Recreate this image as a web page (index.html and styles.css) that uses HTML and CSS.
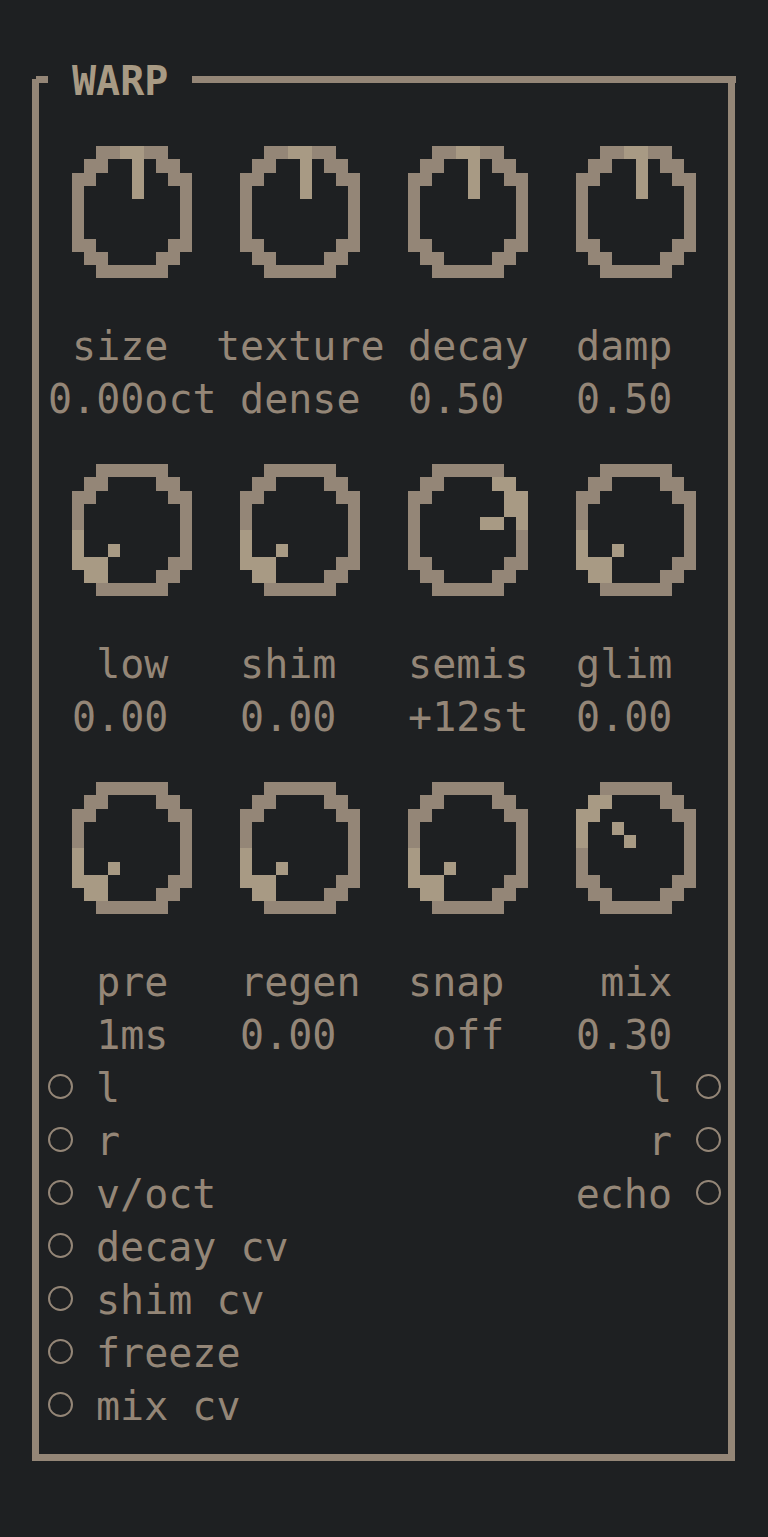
FILE: index.html
```html
<!DOCTYPE html>
<html lang="en">
<head>
<meta charset="utf-8">
<title>WARP</title>
<link rel="stylesheet" href="styles.css">
</head>
<body>
<main class="screen">
  <div class="frame"></div>
  <h1 class="title">WARP</h1>

  <section class="controls">
    <div class="control">
      <div class="knob-wrap"><svg class="knob" viewBox="0 0 10 10" preserveAspectRatio="none"><path class="ring" d="M2 0h6v1h-6zM1 1h2v1h-2zM7 1h2v1h-2zM0 2h2v1h-2zM8 2h2v1h-2zM0 3h1v4h-1zM9 3h1v4h-1zM0 7h2v1h-2zM8 7h2v1h-2zM1 8h2v1h-2zM7 8h2v1h-2zM2 9h6v1h-6z"/><path class="hl" d="M4 0h2v1h-2zM5 1h1v3h-1z"/></svg></div>
      <span class="label"> size</span>
      <span class="value">0.00oct</span>
    </div>
    <div class="control">
      <div class="knob-wrap"><svg class="knob" viewBox="0 0 10 10" preserveAspectRatio="none"><path class="ring" d="M2 0h6v1h-6zM1 1h2v1h-2zM7 1h2v1h-2zM0 2h2v1h-2zM8 2h2v1h-2zM0 3h1v4h-1zM9 3h1v4h-1zM0 7h2v1h-2zM8 7h2v1h-2zM1 8h2v1h-2zM7 8h2v1h-2zM2 9h6v1h-6z"/><path class="hl" d="M4 0h2v1h-2zM5 1h1v3h-1z"/></svg></div>
      <span class="label">texture</span>
      <span class="value"> dense</span>
    </div>
    <div class="control">
      <div class="knob-wrap"><svg class="knob" viewBox="0 0 10 10" preserveAspectRatio="none"><path class="ring" d="M2 0h6v1h-6zM1 1h2v1h-2zM7 1h2v1h-2zM0 2h2v1h-2zM8 2h2v1h-2zM0 3h1v4h-1zM9 3h1v4h-1zM0 7h2v1h-2zM8 7h2v1h-2zM1 8h2v1h-2zM7 8h2v1h-2zM2 9h6v1h-6z"/><path class="hl" d="M4 0h2v1h-2zM5 1h1v3h-1z"/></svg></div>
      <span class="label"> decay</span>
      <span class="value"> 0.50</span>
    </div>
    <div class="control">
      <div class="knob-wrap"><svg class="knob" viewBox="0 0 10 10" preserveAspectRatio="none"><path class="ring" d="M2 0h6v1h-6zM1 1h2v1h-2zM7 1h2v1h-2zM0 2h2v1h-2zM8 2h2v1h-2zM0 3h1v4h-1zM9 3h1v4h-1zM0 7h2v1h-2zM8 7h2v1h-2zM1 8h2v1h-2zM7 8h2v1h-2zM2 9h6v1h-6z"/><path class="hl" d="M4 0h2v1h-2zM5 1h1v3h-1z"/></svg></div>
      <span class="label"> damp</span>
      <span class="value"> 0.50</span>
    </div>

    <div class="control">
      <div class="knob-wrap"><svg class="knob" viewBox="0 0 10 10" preserveAspectRatio="none"><path class="ring" d="M2 0h6v1h-6zM1 1h2v1h-2zM7 1h2v1h-2zM0 2h2v1h-2zM8 2h2v1h-2zM0 3h1v4h-1zM9 3h1v4h-1zM0 7h2v1h-2zM8 7h2v1h-2zM1 8h2v1h-2zM7 8h2v1h-2zM2 9h6v1h-6z"/><path class="hl" d="M0 5h1v2h-1zM0 7h3v1h-3zM1 8h2v1h-2zM3 6h1v1h-1z"/></svg></div>
      <span class="label">  low</span>
      <span class="value"> 0.00</span>
    </div>
    <div class="control">
      <div class="knob-wrap"><svg class="knob" viewBox="0 0 10 10" preserveAspectRatio="none"><path class="ring" d="M2 0h6v1h-6zM1 1h2v1h-2zM7 1h2v1h-2zM0 2h2v1h-2zM8 2h2v1h-2zM0 3h1v4h-1zM9 3h1v4h-1zM0 7h2v1h-2zM8 7h2v1h-2zM1 8h2v1h-2zM7 8h2v1h-2zM2 9h6v1h-6z"/><path class="hl" d="M0 5h1v2h-1zM0 7h3v1h-3zM1 8h2v1h-2zM3 6h1v1h-1z"/></svg></div>
      <span class="label"> shim</span>
      <span class="value"> 0.00</span>
    </div>
    <div class="control">
      <div class="knob-wrap"><svg class="knob" viewBox="0 0 10 10" preserveAspectRatio="none"><path class="ring" d="M2 0h6v1h-6zM1 1h2v1h-2zM7 1h2v1h-2zM0 2h2v1h-2zM8 2h2v1h-2zM0 3h1v4h-1zM9 3h1v4h-1zM0 7h2v1h-2zM8 7h2v1h-2zM1 8h2v1h-2zM7 8h2v1h-2zM2 9h6v1h-6z"/><path class="hl" d="M7 1h2v1h-2zM8 2h2v2h-2zM9 4h1v1h-1zM6 4h2v1h-2z"/></svg></div>
      <span class="label"> semis</span>
      <span class="value"> +12st</span>
    </div>
    <div class="control">
      <div class="knob-wrap"><svg class="knob" viewBox="0 0 10 10" preserveAspectRatio="none"><path class="ring" d="M2 0h6v1h-6zM1 1h2v1h-2zM7 1h2v1h-2zM0 2h2v1h-2zM8 2h2v1h-2zM0 3h1v4h-1zM9 3h1v4h-1zM0 7h2v1h-2zM8 7h2v1h-2zM1 8h2v1h-2zM7 8h2v1h-2zM2 9h6v1h-6z"/><path class="hl" d="M0 5h1v2h-1zM0 7h3v1h-3zM1 8h2v1h-2zM3 6h1v1h-1z"/></svg></div>
      <span class="label"> glim</span>
      <span class="value"> 0.00</span>
    </div>

    <div class="control">
      <div class="knob-wrap"><svg class="knob" viewBox="0 0 10 10" preserveAspectRatio="none"><path class="ring" d="M2 0h6v1h-6zM1 1h2v1h-2zM7 1h2v1h-2zM0 2h2v1h-2zM8 2h2v1h-2zM0 3h1v4h-1zM9 3h1v4h-1zM0 7h2v1h-2zM8 7h2v1h-2zM1 8h2v1h-2zM7 8h2v1h-2zM2 9h6v1h-6z"/><path class="hl" d="M0 5h1v2h-1zM0 7h3v1h-3zM1 8h2v1h-2zM3 6h1v1h-1z"/></svg></div>
      <span class="label">  pre</span>
      <span class="value">  1ms</span>
    </div>
    <div class="control">
      <div class="knob-wrap"><svg class="knob" viewBox="0 0 10 10" preserveAspectRatio="none"><path class="ring" d="M2 0h6v1h-6zM1 1h2v1h-2zM7 1h2v1h-2zM0 2h2v1h-2zM8 2h2v1h-2zM0 3h1v4h-1zM9 3h1v4h-1zM0 7h2v1h-2zM8 7h2v1h-2zM1 8h2v1h-2zM7 8h2v1h-2zM2 9h6v1h-6z"/><path class="hl" d="M0 5h1v2h-1zM0 7h3v1h-3zM1 8h2v1h-2zM3 6h1v1h-1z"/></svg></div>
      <span class="label"> regen</span>
      <span class="value"> 0.00</span>
    </div>
    <div class="control">
      <div class="knob-wrap"><svg class="knob" viewBox="0 0 10 10" preserveAspectRatio="none"><path class="ring" d="M2 0h6v1h-6zM1 1h2v1h-2zM7 1h2v1h-2zM0 2h2v1h-2zM8 2h2v1h-2zM0 3h1v4h-1zM9 3h1v4h-1zM0 7h2v1h-2zM8 7h2v1h-2zM1 8h2v1h-2zM7 8h2v1h-2zM2 9h6v1h-6z"/><path class="hl" d="M0 5h1v2h-1zM0 7h3v1h-3zM1 8h2v1h-2zM3 6h1v1h-1z"/></svg></div>
      <span class="label"> snap</span>
      <span class="value">  off</span>
    </div>
    <div class="control">
      <div class="knob-wrap"><svg class="knob" viewBox="0 0 10 10" preserveAspectRatio="none"><path class="ring" d="M2 0h6v1h-6zM1 1h2v1h-2zM7 1h2v1h-2zM0 2h2v1h-2zM8 2h2v1h-2zM0 3h1v4h-1zM9 3h1v4h-1zM0 7h2v1h-2zM8 7h2v1h-2zM1 8h2v1h-2zM7 8h2v1h-2zM2 9h6v1h-6z"/><path class="hl" d="M1 1h2v1h-2zM0 2h2v1h-2zM0 3h1v2h-1zM3 3h1v1h-1zM4 4h1v1h-1z"/></svg></div>
      <span class="label">  mix</span>
      <span class="value"> 0.30</span>
    </div>
  </section>

  <section class="ports">
    <ul class="port-list inputs">
      <li class="port"><span class="jack"></span><span class="port-name">l</span></li>
      <li class="port"><span class="jack"></span><span class="port-name">r</span></li>
      <li class="port"><span class="jack"></span><span class="port-name">v/oct</span></li>
      <li class="port"><span class="jack"></span><span class="port-name">decay cv</span></li>
      <li class="port"><span class="jack"></span><span class="port-name">shim cv</span></li>
      <li class="port"><span class="jack"></span><span class="port-name">freeze</span></li>
      <li class="port"><span class="jack"></span><span class="port-name">mix cv</span></li>
    </ul>
    <ul class="port-list outputs">
      <li class="port"><span class="port-name">l</span><span class="jack"></span></li>
      <li class="port"><span class="port-name">r</span><span class="jack"></span></li>
      <li class="port"><span class="port-name">echo</span><span class="jack"></span></li>
    </ul>
  </section>
</main>
</body>
</html>
```

FILE: styles.css
```css
/* Character-cell panel: 32 columns of 24px, 29 rows of 53px */
:root {
  --bg: #1e2022;
  --ink: #948677;
  --ink-hi: #a89a84;
}

* {
  box-sizing: border-box;
}

html,
body {
  margin: 0;
  padding: 0;
  background: var(--bg);
}

.screen {
  display: grid;
  grid-template-columns: repeat(32, 24px);
  grid-template-rows: repeat(29, 53px);
  width: 768px;
  height: 1537px;
  overflow: hidden;
  font-family: "DejaVu Sans Mono", "Liberation Mono", monospace;
  font-size: 40px;
  line-height: 53px;
  color: var(--ink);
}

/* Box outline drawn through the centres of the border cells */
.frame {
  grid-column: 2 / 32;
  grid-row: 2 / 29;
  position: relative;
  margin: 26px 9px 23px 8px;
  border: 7px solid var(--ink);
  border-top: 0;
}

.frame::before {
  content: "";
  position: absolute;
  top: -3px;
  left: -3px;
  right: -8px;
  height: 7px;
  background: var(--ink);
}

.title {
  grid-column: 3 / 9;
  grid-row: 2;
  position: relative;
  margin: 0;
  padding-left: 24px;
  background: var(--bg);
  font-size: 40px;
  font-weight: bold;
  line-height: 56px;
  color: var(--ink-hi);
}

/* Knob grid: 4 controls across, 3 down */
.controls {
  grid-column: 3 / 31;
  grid-row: 3 / 21;
  display: grid;
  grid-template-columns: repeat(4, 168px);
  grid-template-rows: repeat(3, 318px);
}

.control {
  display: flex;
  flex-direction: column;
}

.knob-wrap {
  height: 212px;
  display: flex;
  align-items: center;
  justify-content: center;
}

.knob {
  display: block;
  width: 120px;
  height: 132.5px;
  shape-rendering: crispEdges;
}

.ring {
  fill: var(--ink);
}

.hl {
  fill: var(--ink-hi);
}

.label,
.value {
  display: block;
  height: 53px;
  line-height: 56px;
  white-space: pre;
}

/* Jacks */
.ports {
  grid-column: 3 / 31;
  grid-row: 21 / 28;
  display: flex;
  justify-content: space-between;
  align-items: flex-start;
}

.port-list {
  list-style: none;
  margin: 0;
  padding: 0;
  display: flex;
  flex-direction: column;
}

.outputs {
  align-items: flex-end;
}

.port {
  height: 53px;
  display: flex;
  align-items: center;
  gap: 24px;
  white-space: pre;
}

.port-name {
  height: 53px;
  line-height: 56px;
}

.jack {
  flex: none;
  width: 25px;
  height: 25px;
  margin: 0 -0.5px;
  border: 2px solid var(--ink);
  border-radius: 50%;
}
```
